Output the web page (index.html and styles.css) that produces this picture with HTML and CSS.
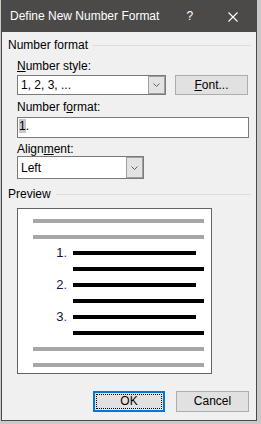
FILE: index.html
```html
<!DOCTYPE html>
<html lang="en">
<head>
    <meta charset="UTF-8">
    <meta name="viewport" content="width=device-width, initial-scale=1.0">
    <title>Define New Number Format</title>
    <link rel="stylesheet" href="styles.css">
</head>
<body>
    <div class="dialog">
        <div class="titlebar">
            <span class="title">Define New Number Format</span>
            <span class="help">?</span>
            <svg class="close" width="10" height="10" viewBox="0 0 10 10">
                <path d="M0.5 0.5 L9.5 9.5 M9.5 0.5 L0.5 9.5" stroke="#fff" stroke-width="1.1" fill="none"/>
            </svg>
        </div>

        <div class="content">
            <div class="group">Number format</div>
            <div class="fields">
                <div class="label first"><u>N</u>umber style:</div>
                <div class="row">
                    <div class="combo style-combo">
                        <span class="value">1, 2, 3, ...</span>
                        <span class="drop">
                            <svg width="7" height="4" viewBox="0 0 7 4"><polyline points="0.5,0.5 3.5,3.5 6.5,0.5" stroke="#606060" fill="none"/></svg>
                        </span>
                    </div>
                    <button class="btn font-btn"><u>F</u>ont...</button>
                </div>
                <div class="label gap-format">Number f<u>o</u>rmat:</div>
                <div class="textbox"><span class="sel">1</span>.</div>
                <div class="label gap-align">Align<u>m</u>ent:</div>
                <div class="combo align-combo">
                    <span class="value">Left</span>
                    <span class="drop">
                        <svg width="7" height="4" viewBox="0 0 7 4"><polyline points="0.5,0.5 3.5,3.5 6.5,0.5" stroke="#606060" fill="none"/></svg>
                    </span>
                </div>
            </div>

            <div class="group preview-group">Preview</div>
            <div class="preview">
                <div class="bar gray"></div>
                <div class="bar gray"></div>
                <div class="item"><span class="num">1<span class="dot">.</span></span><div class="bar short"></div></div>
                <div class="bar long"></div>
                <div class="item"><span class="num">2<span class="dot">.</span></span><div class="bar short"></div></div>
                <div class="bar long"></div>
                <div class="item"><span class="num">3<span class="dot">.</span></span><div class="bar short"></div></div>
                <div class="bar long"></div>
                <div class="bar gray"></div>
                <div class="bar gray"></div>
            </div>

            <div class="actions">
                <button class="btn ok"><span class="focus">OK</span></button>
                <button class="btn cancel">Cancel</button>
            </div>
        </div>
    </div>
</body>
</html>
```

FILE: styles.css
```css
body {
    margin: 0;
    background: #c9c9c9;
    font-family: "Liberation Sans", Arial, sans-serif;
    font-size: 12px;
    color: #000;
}
.dialog {
    box-sizing: border-box;
    width: 256px;
    height: 421px;
    margin-left: 1px;
    border: 1px solid #4b4a48;
    background: #f0f0f0;
}
.titlebar {
    display: flex;
    align-items: center;
    height: 31px;
    padding-left: 8px;
    background: #4b4a48;
    color: #fff;
    line-height: 31px;
}
.help {
    margin-left: 27px;
}
.close {
    margin-left: 35px;
}
.content {
    padding: 6px 5px 8px 6px;
}
.group {
    display: flex;
    align-items: center;
    line-height: 14px;
}
.group::after {
    content: "";
    flex: 1;
    height: 1px;
    margin-left: 5px;
    background: #dcdcdc;
}
.fields {
    margin-left: 9px;
}
.label {
    line-height: 14px;
    margin-bottom: 2px;
}
.label.first {
    margin-top: 7px;
}
.label.gap-format {
    margin-top: 5px;
    margin-bottom: 3px;
}
.label.gap-align {
    margin-top: 4px;
    margin-bottom: 0;
}
.row {
    display: flex;
}
.combo {
    box-sizing: border-box;
    display: flex;
    border: 1px solid #7a7a7a;
    background: #fff;
}
.combo .value {
    flex: 1;
    padding-left: 3px;
}
.combo .drop {
    box-sizing: border-box;
    display: flex;
    align-items: center;
    justify-content: center;
    width: 17px;
    border: 1px solid #a0a0a0;
    background: #e3e3e3;
}
.style-combo {
    width: 149px;
    height: 20px;
    line-height: 18px;
}
.align-combo {
    width: 127px;
    height: 23px;
    line-height: 20px;
}
.align-combo .value {
    padding-top: 1px;
}
.btn {
    box-sizing: border-box;
    font: inherit;
    color: #000;
    background: #e1e1e1;
    border: 1px solid #adadad;
    padding: 0;
    text-align: center;
}
.font-btn {
    width: 73px;
    height: 20px;
    margin-left: 9px;
    padding-top: 1px;
    line-height: 17px;
}
.textbox {
    box-sizing: border-box;
    width: 232px;
    height: 21px;
    padding-left: 1px;
    border: 1px solid #7a7a7a;
    background: #fff;
    line-height: 17px;
}
.sel {
    background: #c8c8c8;
}
.preview-group {
    margin-top: 8px;
}
.preview {
    box-sizing: border-box;
    width: 195px;
    height: 166px;
    margin: 7px 0 0 9px;
    padding: 10px 7px 0 15px;
    border: 1px solid #646464;
    background: #fff;
}
.bar {
    height: 4px;
    margin-bottom: 12px;
    background: #000;
}
.bar.gray {
    background: #a6a6a6;
}
.bar.long {
    margin-left: 40px;
}
.item {
    display: flex;
    height: 4px;
    margin-bottom: 12px;
}
.item .bar {
    flex: 1;
    margin: 0 8px 0 6px;
}
.num {
    width: 34px;
    text-align: right;
    font-size: 13px;
    line-height: 4px;
    color: #10163a;
}
.num .dot {
    color: #2a4aa0;
}
.actions {
    display: flex;
    justify-content: flex-end;
    gap: 11px;
    margin-top: 17px;
    padding-right: 2px;
}
.ok {
    width: 72px;
    height: 21px;
    padding: 1px;
    border: 2px solid #0078d7;
}
.ok .focus {
    box-sizing: border-box;
    display: block;
    height: 100%;
    border: 1px dotted #000;
    line-height: 13px;
}
.cancel {
    width: 73px;
    height: 21px;
    line-height: 19px;
}
```
